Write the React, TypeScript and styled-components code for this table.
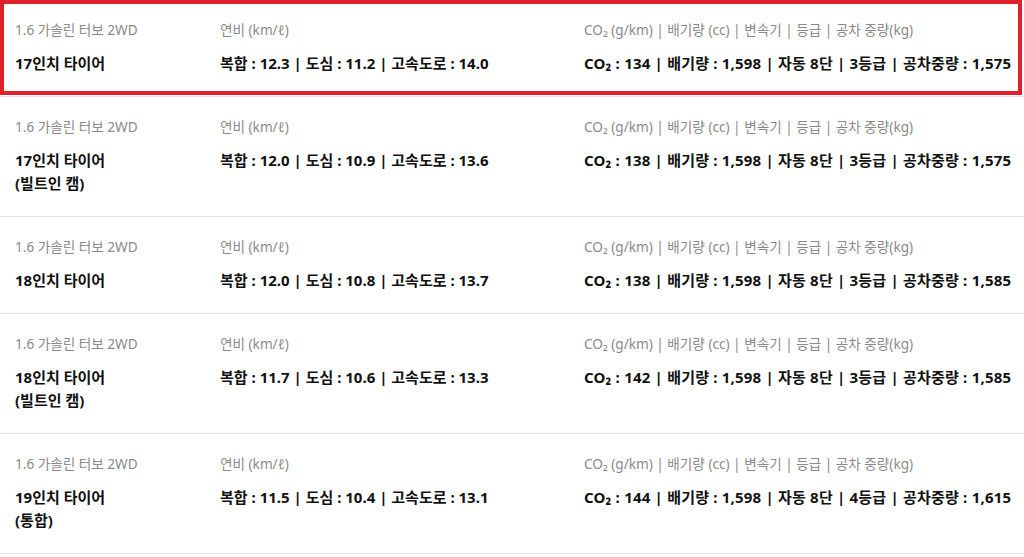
import React from 'react';
import styled, { createGlobalStyle } from 'styled-components';

type Spec = {
  tire: string;
  note?: string;
  combined: string;
  city: string;
  highway: string;
  co2: number;
  grade: number;
  weight: string;
};

const specs: Spec[] = [
  { tire: '17인치 타이어', combined: '12.3', city: '11.2', highway: '14.0', co2: 134, grade: 3, weight: '1,575' },
  { tire: '17인치 타이어', note: '(빌트인 캠)', combined: '12.0', city: '10.9', highway: '13.6', co2: 138, grade: 3, weight: '1,575' },
  { tire: '18인치 타이어', combined: '12.0', city: '10.8', highway: '13.7', co2: 138, grade: 3, weight: '1,585' },
  { tire: '18인치 타이어', note: '(빌트인 캠)', combined: '11.7', city: '10.6', highway: '13.3', co2: 142, grade: 3, weight: '1,585' },
  { tire: '19인치 타이어', note: '(통합)', combined: '11.5', city: '10.4', highway: '13.1', co2: 144, grade: 4, weight: '1,615' },
];

const App: React.FC = () => {
  return (
    <>
      <GlobalStyle />
      <SpecList>
        {specs.map((s, i) => (
          <SpecRow key={i} $highlight={i === 0}>
            <Cell>
              <Label>1.6 가솔린 터보 2WD</Label>
              <Value>{s.tire}</Value>
              {s.note && <Value>{s.note}</Value>}
            </Cell>
            <Cell>
              <Label>연비 (km/ℓ)</Label>
              <Value>
                복합 : {s.combined} | 도심 : {s.city} | 고속도로 : {s.highway}
              </Value>
            </Cell>
            <Cell>
              <Label>CO₂ (g/km) | 배기량 (cc) | 변속기 | 등급 | 공차 중량(kg)</Label>
              <Value $wide>
                CO₂ : {s.co2} | 배기량 : 1,598 | 자동 8단 | {s.grade}등급 | 공차중량 : {s.weight}
              </Value>
            </Cell>
          </SpecRow>
        ))}
      </SpecList>
    </>
  );
};

const GlobalStyle = createGlobalStyle`
  body {
    margin: 0;
    background: #fff;
    font-family: 'Noto Sans', 'Noto Sans CJK KR', sans-serif;
  }
`;

const SpecList = styled.div`
  width: 1024px;
`;

const SpecRow = styled.div<{ $highlight?: boolean }>`
  position: relative;
  display: grid;
  grid-template-columns: 205px 364px 1fr;
  padding: 20px 0 21px 15px;
  border-bottom: 1px solid #e2e2e2;

  ${({ $highlight }) =>
    $highlight &&
    `
    &::after {
      content: '';
      position: absolute;
      top: 0;
      left: 0;
      right: 2px;
      bottom: 1px;
      border: 4px solid #e0212b;
      pointer-events: none;
    }
  `}
`;

const Cell = styled.div`
  display: flex;
  flex-direction: column;
`;

const Label = styled.div`
  font-size: 13.6px;
  line-height: 20px;
  color: #8a8a8a;
  margin-bottom: 12px;
  white-space: nowrap;
`;

const Value = styled.div<{ $wide?: boolean }>`
  font-size: 15px;
  line-height: 23px;
  font-weight: 700;
  color: #111;
  white-space: nowrap;
  letter-spacing: ${({ $wide }) => ($wide ? '0.2px' : '0')};
`;

export default App;
